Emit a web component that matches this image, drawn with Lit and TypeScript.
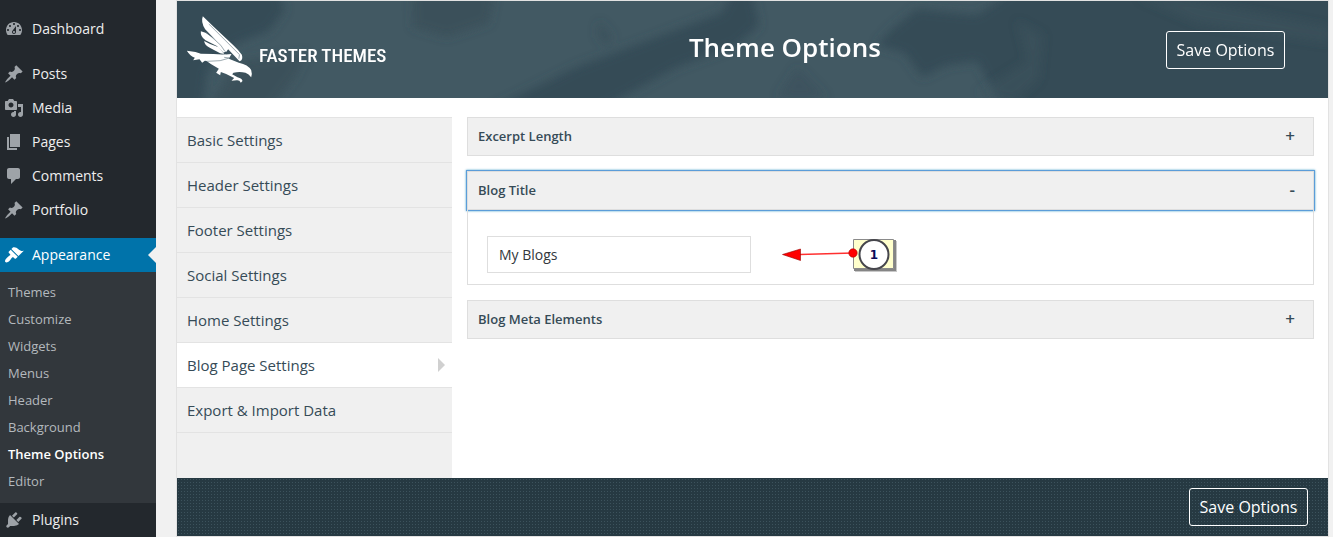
import { LitElement, html, svg, css } from "lit";
import { customElement, state } from "lit/decorators.js";
import { classMap } from "lit/directives/class-map.js";

const ICONS: Record<string, string> = {
  dashboard:
    "M3.76 16h12.48C17.34 14.63 18 12.89 18 11c0-4.41-3.58-8-8-8s-8 3.59-8 8c0 1.89.66 3.63 1.76 5zM10 4c.55 0 1 .45 1 1s-.45 1-1 1-1-.45-1-1 .45-1 1-1zM6 6c.55 0 1 .45 1 1s-.45 1-1 1-1-.45-1-1 .45-1 1-1zm8 0c.55 0 1 .45 1 1s-.45 1-1 1-1-.45-1-1 .45-1 1-1zm-5.37 5.55L12 7v6c0 1.1-.9 2-2 2s-2-.9-2-2c0-.57.24-1.08.63-1.45zM4 10c.55 0 1 .45 1 1s-.45 1-1 1-1-.45-1-1 .45-1 1-1zm12 0c.55 0 1 .45 1 1s-.45 1-1 1-1-.45-1-1 .45-1 1-1zm-5 3c0-.55-.45-1-1-1s-1 .45-1 1 .45 1 1 1 1-.45 1-1z",
  pin: "M10.44 3.02l1.82-1.82 6.36 6.35-1.83 1.82c-1.05-.68-2.48-.57-3.41.36l-.75.75c-.92.93-1.04 2.35-.35 3.41l-1.83 1.82-2.41-2.41-2.8 2.79c-.42.42-3.38 2.71-3.8 2.29s1.86-3.39 2.28-3.81l2.79-2.79L4.1 9.36l1.83-1.82c1.05.69 2.48.57 3.4-.36l.75-.75c.93-.92 1.05-2.35.36-3.41z",
  media:
    "M13 11V4c0-.55-.45-1-1-1h-1.67L9 1H5L3.67 3H2c-.55 0-1 .45-1 1v7c0 .55.45 1 1 1h10c.55 0 1-.45 1-1zM7 4.5c1.38 0 2.5 1.12 2.5 2.5S8.38 9.5 7 9.5 4.5 8.38 4.5 7 5.62 4.5 7 4.5zM14 6h5v10.5c0 1.38-1.12 2.5-2.5 2.5S14 17.88 14 16.5s1.12-2.5 2.5-2.5c.17 0 .34.02.5.05V9h-3V6zm-4 8.05V13h2v3.5c0 1.38-1.12 2.5-2.5 2.5S7 17.88 7 16.5 8.12 14 9.5 14c.17 0 .34.02.5.05z",
  pages: "M6 15V2h10v13H6zm-1 1h8v2H3V5h2v11z",
  comments:
    "M5 2h9c1.1 0 2 .9 2 2v7c0 1.1-.9 2-2 2h-2l-5 5v-5H5c-1.1 0-2-.9-2-2V4c0-1.1.9-2 2-2z",
  brush:
    "M14.48 11.06L7.41 3.99l1.5-1.5c.5-.56 2.3-.47 3.51.32 1.21.8 1.43 1.28 2.91 2.1 1.18.64 2.45 1.26 4.45.85zm-.71.71L6.7 4.7 4.93 6.47c-.39.39-.39 1.02 0 1.41l1.06 1.06c.39.39.39 1.03 0 1.42-.6.6-1.43 1.11-2.21 1.69-.35.26-.7.53-1.01.84C1.43 14.23.4 16.08 1.4 17.07c.99 1 2.84-.03 4.18-1.36.31-.31.58-.66.85-1.02.57-.78 1.08-1.61 1.69-2.21.39-.39 1.02-.39 1.41 0l1.06 1.06c.39.39 1.02.39 1.41 0z",
  plug: "M13.11 4.36L9.87 7.6 8 5.73l3.24-3.24c.35-.34 1.05-.2 1.56.32.52.51.66 1.21.31 1.55zm-8 1.77l.91-1.12 9.01 9.01-1.19.84c-.71.71-2.63 1.16-3.82 1.16H6.14L4.9 17.26c-.59.59-1.54.59-2.12 0-.59-.58-.59-1.53 0-2.12l1.24-1.24v-3.88c0-1.13.4-3.19 1.09-3.89zm7.26 3.97l3.24-3.24c.34-.35 1.04-.21 1.55.31.52.51.66 1.21.31 1.55l-3.24 3.25z",
};

@customElement("admin-menu")
class AdminMenu extends LitElement {
  static styles = css`
    :host {
      display: block;
      flex: none;
      width: 156px;
      padding-top: 12px;
      box-sizing: border-box;
      background: #23282d;
      font-family: "Open Sans", sans-serif;
    }
    a {
      text-decoration: none;
    }
    .item {
      display: flex;
      align-items: center;
      gap: 8px;
      height: 34px;
      padding-left: 4px;
      color: #eee;
      font-size: 14px;
      line-height: 18px;
    }
    .icon {
      width: 20px;
      height: 20px;
      fill: #9ea3a8;
    }
    .gap {
      margin-top: 11px;
    }
    .current {
      background: #0073aa;
      color: #fff;
    }
    .current .icon {
      fill: #fff;
    }
    .notch {
      width: 8px;
      height: 16px;
      margin-left: auto;
      background: #f1f1f1;
      clip-path: polygon(100% 0, 100% 100%, 0 50%);
    }
    .sub {
      display: flex;
      flex-direction: column;
      padding: 7px 0 8px;
      background: #32373c;
    }
    .sub a {
      padding: 0 8px;
      color: #b4b9be;
      font-size: 13px;
      line-height: 27px;
    }
    .sub .active {
      color: #fff;
      font-weight: 600;
    }
  `;

  private item(label: string, icon: string, extra = {}) {
    const on = label === "Appearance";
    return html`<a href="#" class=${classMap({ item: true, current: on, ...extra })}>
      <svg class="icon" viewBox="0 0 20 20" aria-hidden="true">${svg`<path d=${ICONS[icon]} />`}</svg>
      <span>${label}</span>
      ${on ? html`<span class="notch"></span>` : ""}
    </a>`;
  }

  render() {
    const sub = ["Themes", "Customize", "Widgets", "Menus", "Header", "Background", "Theme Options", "Editor"];
    return html`<nav aria-label="Admin">
      ${this.item("Dashboard", "dashboard")}
      ${this.item("Posts", "pin", { gap: true })}
      ${this.item("Media", "media")}
      ${this.item("Pages", "pages")}
      ${this.item("Comments", "comments")}
      ${this.item("Portfolio", "pin")}
      ${this.item("Appearance", "brush", { gap: true })}
      <div class="sub">
        ${sub.map((s) => html`<a href="#" class=${classMap({ active: s === "Theme Options" })}>${s}</a>`)}
      </div>
      ${this.item("Plugins", "plug")}
    </nav>`;
  }
}

@customElement("app-root")
class AppRoot extends LitElement {
  @state() private open = "Blog Title";
  @state() private tab = "Blog Page Settings";

  static styles = css`
    :host {
      display: flex;
      min-height: 100vh;
      background: #f1f1f1;
      color: #364b57;
      font-family: "Open Sans", sans-serif;
    }
    * {
      box-sizing: border-box;
    }
    button,
    input {
      font-family: inherit;
      color: inherit;
    }
    .panel {
      flex: 1;
      display: flex;
      flex-direction: column;
      margin: 0 4px 0 20px;
      border: 1px solid #e2e2e2;
      background: #fff;
    }
    .header {
      position: relative;
      display: grid;
      grid-template-columns: 25% 1fr 223px;
      align-items: center;
      height: 97px;
      background: #425963;
      color: #fff;
    }
    .texture {
      position: absolute;
      inset: 0;
      width: 100%;
      height: 100%;
    }
    .logo,
    .title,
    .action {
      position: relative;
    }
    .logo {
      display: flex;
      align-items: center;
      gap: 6px;
      padding-left: 9px;
    }
    .bird {
      width: 67px;
      height: 68px;
    }
    .brand {
      padding-top: 12px;
      font: 500 19px/24px "Roboto Condensed", "Arial Narrow", sans-serif;
      white-space: nowrap;
    }
    .title {
      margin: 0;
      padding-bottom: 6px;
      font-size: 26px;
      font-weight: 600;
      line-height: 36px;
      text-align: center;
    }
    .action {
      padding-left: 61px;
    }
    .save {
      width: 119px;
      height: 38px;
      padding: 0;
      border: 1px solid #fff;
      border-radius: 3px;
      background: transparent;
      color: #fff;
      font-size: 16px;
      line-height: 24px;
      white-space: nowrap;
    }
    .body {
      flex: 1;
      display: flex;
      padding-top: 19px;
    }
    .tabs {
      flex: none;
      width: 275px;
      border-top: 1px solid #e3e3e3;
      background: #f0f0f0;
    }
    .tab {
      display: flex;
      align-items: center;
      justify-content: space-between;
      height: 45px;
      padding: 0 7px 0 10px;
      border-bottom: 1px solid #e3e3e3;
      color: #364b57;
      font-size: 15px;
      line-height: 20px;
      text-decoration: none;
    }
    .selected {
      background: #fff;
    }
    .selected::after {
      content: "";
      border: 7px solid transparent;
      border-left-color: #d0d0d0;
      border-right-width: 0;
    }
    .sections {
      flex: 1;
      display: flex;
      flex-direction: column;
      gap: 15px;
      padding: 0 14px 0 15px;
    }
    .head {
      display: flex;
      align-items: center;
      justify-content: space-between;
      width: 100%;
      height: 39px;
      padding: 0 18px 2px 10px;
      border: 1px solid #dedede;
      background: #f0f0f0;
      font-size: 13px;
      font-weight: 600;
      line-height: 18px;
    }
    .sign {
      font-size: 17px;
    }
    .expanded .head {
      outline: none;
      box-shadow: 0 0 0 1px #5b9dd9, 0 0 2px 1px rgba(30, 140, 190, 0.8);
    }
    .content {
      display: flex;
      align-items: center;
      gap: 29px;
      padding: 26px 19px 11px;
      border: 1px solid #dedede;
      border-top: 0;
    }
    .field {
      width: 264px;
      height: 37px;
      padding: 0 11px;
      border: 1px solid #dedede;
      background: #fff;
      color: #32373c;
      font-size: 14px;
      outline: none;
    }
    .pointer {
      width: 120px;
      height: 37px;
    }
    .pointer text {
      font: bold 12px "DejaVu Sans", sans-serif;
    }
    .footer {
      display: flex;
      align-items: center;
      justify-content: flex-end;
      height: 58px;
      padding-right: 20px;
      background: conic-gradient(at 1px 1px, #263942 75%, #3c525c 0) 1px 1px / 3px 3px;
    }
  `;

  private texture() {
    return html`<svg class="texture" viewBox="0 0 1151 97" preserveAspectRatio="none" aria-hidden="true">
      <defs>
        <filter id="soft" x="-10%" y="-20%" width="120%" height="140%"><feGaussianBlur stdDeviation="5" /></filter>
      </defs>
      <g filter="url(#soft)" fill="#364b57">
        <path d="M-20 -20H95L108 8 92 30 60 42 30 70 24 120H-20z" />
        <path opacity=".6" d="M60 60L130 52 118 76 92 110H30z" />
        <path opacity=".6" d="M235 -10H318L312 22 270 36 236 26z" />
        <path opacity=".5" d="M422 20L436 36 430 46 420 34z" />
        <path d="M310 110L400 66 470 40 545 12 562 -20H572L582 24 560 44 500 66 420 110z" />
        <path opacity=".4" d="M600 97L620 66 650 97z" />
        <path d="M715 28L740 8 800 14 850 -20H1170V120H880L820 96 800 60 770 64 745 76 728 52 700 44z" />
      </g>
      <g filter="url(#soft)" fill="#425963">
        <path opacity=".35" d="M960 -4L1010 -2 1151 26V42L1020 22z" />
        <path opacity=".35" d="M840 20L866 34 862 78 838 100 800 92 850 60z" />
      </g>
    </svg>`;
  }

  private bird() {
    return html`<svg class="bird" viewBox="48 44 200 204" aria-hidden="true">
      <g fill="#fff">
        <path d="M98 45Q91 62 105 84L150 130 168 152 174 144 208 180Q220 176 215 160 205 146 188 130L132 78Z" />
        <path d="M92 90Q90 106 106 117L140 134 160 154 168 150 146 122 106 94Z" />
        <path d="M102 119Q103 132 120 140L150 156 162 158 146 138Q120 130 102 119Z" />
        <path d="M50 148Q60 164 74 169L69 177 88 174 96 184 104 178 140 182 168 160 130 158 92 157 76 152Z" />
        <path d="M108 178L146 172 158 160 184 158 176 172 206 184Q234 190 243 206 247 218 243 228 236 218 226 214 208 210 190 214L186 219 202 228Q216 232 217 239L212 244Q208 236 200 237L184 238 192 230 168 218 152 212 150 222 138 214 146 202 122 188Z" />
      </g>
      <g fill="none" stroke="#6d808a" stroke-width="2">
        <path d="M116 68L208 160 206 172" />
        <path d="M108 92L152 132 164 150" />
        <path d="M110 180L150 178 178 170 162 168" />
      </g>
    </svg>`;
  }

  private pointer() {
    return html`<svg class="pointer" viewBox="780 236 120 37" role="img" aria-label="Step 1">
      <path d="M855 241H897V272H855z" fill="#c8c8c8" />
      <path d="M854 240H896V271H854z" fill="#858585" />
      <path d="M853.5 239.5H893.5V268.5H853.5z" fill="#ffffcc" stroke="#8a8a8a" />
      <circle cx="874" cy="254.500" r="14.500" fill="#fff" stroke="#46464c" stroke-width="2" />
      <text x="874" y="259" text-anchor="middle" fill="#0a0a5a">1</text>
      <path d="M800 254.500L853 253" stroke="#ff3030" stroke-width="1.300" />
      <path d="M782.500 254.500L800.500 249V260.500z" fill="#f00" stroke="#900" stroke-width=".6" />
      <circle cx="853" cy="253" r="4.200" fill="#f00" stroke="#a00" stroke-width=".6" />
    </svg>`;
  }

  private section(name: string) {
    const on = this.open === name;
    return html`<section class=${classMap({ expanded: on })}>
      <button class="head" aria-expanded=${on} @click=${() => (this.open = on ? "" : name)}>
        <span>${name}</span><span class="sign">${on ? "-" : "+"}</span>
      </button>
      ${on
        ? html`<div class="content">
            <input class="field" type="text" aria-label=${name} value="My Blogs" />
            ${this.pointer()}
          </div>`
        : ""}
    </section>`;
  }

  render() {
    const tabs = [
      "Basic Settings",
      "Header Settings",
      "Footer Settings",
      "Social Settings",
      "Home Settings",
      "Blog Page Settings",
      "Export & Import Data",
    ];
    return html`
      <admin-menu></admin-menu>
      <main class="panel">
        <header class="header">
          ${this.texture()}
          <div class="logo">${this.bird()}<span class="brand">FASTER THEMES</span></div>
          <h1 class="title">Theme Options</h1>
          <div class="action"><button class="save">Save Options</button></div>
        </header>
        <div class="body">
          <nav class="tabs" aria-label="Settings">
            ${tabs.map(
              (t) => html`<a
                href="#"
                class=${classMap({ tab: true, selected: t === this.tab })}
                @click=${(e: Event) => {
                  e.preventDefault();
                  this.tab = t;
                }}
                >${t}</a
              >`,
            )}
          </nav>
          <div class="sections">
            ${["Excerpt Length", "Blog Title", "Blog Meta Elements"].map((n) => this.section(n))}
          </div>
        </div>
        <footer class="footer"><button class="save">Save Options</button></footer>
      </main>
    `;
  }
}
